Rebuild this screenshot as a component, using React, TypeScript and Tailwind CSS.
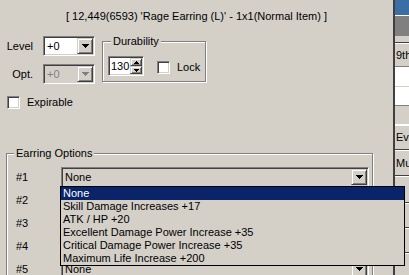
import React from "react";

const sunken =
  "border border-t-[#808080] border-l-[#808080] border-b-white border-r-white shadow-[inset_1px_1px_0_#404040,inset_-1px_-1px_0_#d4d0c8]";
const raised =
  "border border-t-[#d4d0c8] border-l-[#d4d0c8] border-b-[#404040] border-r-[#404040] shadow-[inset_1px_1px_0_#fff,inset_-1px_-1px_0_#808080]";
const etched =
  "border border-[#808080] shadow-[inset_1px_1px_0_#fff,1px_1px_0_#fff]";

function Arrow({ color = "#000" }: { color?: string }) {
  return (
    <svg width="7" height="4" viewBox="0 0 7 4" shapeRendering="crispEdges">
      <rect x="0" y="0" width="7" height="1" fill={color} />
      <rect x="1" y="1" width="5" height="1" fill={color} />
      <rect x="2" y="2" width="3" height="1" fill={color} />
      <rect x="3" y="3" width="1" height="1" fill={color} />
    </svg>
  );
}

function SmallArrow({ up }: { up?: boolean }) {
  return (
    <svg width="5" height="3" viewBox="0 0 5 3" shapeRendering="crispEdges">
      {up ? (
        <>
          <rect x="2" y="0" width="1" height="1" fill="#000" />
          <rect x="1" y="1" width="3" height="1" fill="#000" />
          <rect x="0" y="2" width="5" height="1" fill="#000" />
        </>
      ) : (
        <>
          <rect x="0" y="0" width="5" height="1" fill="#000" />
          <rect x="1" y="1" width="3" height="1" fill="#000" />
          <rect x="2" y="2" width="1" height="1" fill="#000" />
        </>
      )}
    </svg>
  );
}

function Combo({
  value,
  className = "",
  white,
  disabled,
}: {
  value: string;
  className?: string;
  white?: boolean;
  disabled?: boolean;
}) {
  return (
    <div
      className={`flex h-[20px] p-[1px] ${sunken} ${
        white ? "bg-white" : "bg-[#d4d0c8]"
      } ${className}`}
    >
      <div
        className={`flex-1 pl-[2px] leading-[16px] whitespace-nowrap ${
          disabled ? "text-[#808080]" : "text-black"
        }`}
      >
        {value}
      </div>
      <div
        className={`w-[16px] h-[16px] flex items-center justify-center bg-[#d4d0c8] ${raised}`}
      >
        <Arrow color={disabled ? "#808080" : "#000"} />
      </div>
    </div>
  );
}

function Check() {
  return <div className={`w-[13px] h-[13px] bg-white shrink-0 ${sunken}`} />;
}

const items = [
  "None",
  "Skill Damage Increases +17",
  "ATK / HP +20",
  "Excellent Damage Power Increase +35",
  "Critical Damage Power Increase +35",
  "Maximum Life Increase +200",
];

const rows = [
  { n: "#1", v: "None" },
  { n: "#2", v: "" },
  { n: "#3", v: "" },
  { n: "#4", v: "" },
  { n: "#5", v: "None" },
];

export default function App() {
  return (
    <div className="relative w-[409px] h-[275px] overflow-hidden bg-[#d4d0c8] flex font-['Liberation_Sans',Arial,sans-serif] text-[11px] text-black">
      {/* Left panel */}
      <div className="w-[393px] shrink-0 flex flex-col">
        <div className="pt-[9px] pl-[66px] leading-[14px] h-[23px] whitespace-nowrap">
          [ 12,449(6593) 'Rage Earring (L)' - 1x1(Normal Item) ]
        </div>

        <div className="mt-[13px] flex">
          <div className="flex flex-col gap-[8px]">
            <div className="flex items-center">
              <div className="w-[33px] text-right leading-[20px]">Level</div>
              <Combo value="+0" white className="ml-[10px] w-[52px]" />
            </div>
            <div className="flex items-center">
              <div className="w-[33px] text-right leading-[20px]">Opt.</div>
              <Combo value="+0" disabled className="ml-[10px] w-[52px]" />
            </div>
          </div>

          <div className={`relative ml-[7px] mt-[5px] w-[104px] h-[41px] ${etched}`}>
            <span className="absolute -top-[8px] left-[8px] px-[2px] bg-[#d4d0c8] leading-[14px]">
              Durability
            </span>
            <div className="flex items-center pt-[14px] pl-[5px]">
              <div className={`flex h-[20px] w-[36px] p-[1px] bg-white ${sunken}`}>
                <div className="flex-1 pl-[1px] leading-[16px]">130</div>
                <div className="w-[12px] flex flex-col">
                  <div className={`h-[8px] flex items-center justify-center bg-[#d4d0c8] ${raised}`}>
                    <SmallArrow up />
                  </div>
                  <div className={`h-[8px] flex items-center justify-center bg-[#d4d0c8] ${raised}`}>
                    <SmallArrow />
                  </div>
                </div>
              </div>
              <div className="ml-[13px] mt-[2px] flex items-center gap-[7px]">
                <Check />
                <span className="leading-[14px]">Lock</span>
              </div>
            </div>
          </div>
        </div>

        <div className="mt-[11px] pl-[7px] flex items-center gap-[7px]">
          <Check />
          <span className="leading-[14px]">Expirable</span>
        </div>

        <div className={`relative mt-[44px] ml-[6px] w-[367px] h-[140px] ${etched}`}>
          <span className="absolute -top-[8px] left-[7px] px-[2px] bg-[#d4d0c8] leading-[14px]">
            Earring Options
          </span>
          <div className="pt-[13px] pl-[9px] pr-[3px] flex flex-col gap-[3px]">
            {rows.map((r) => (
              <div key={r.n} className="flex items-center">
                <div className="w-[45px] leading-[20px]">{r.n}</div>
                <Combo value={r.v} className="flex-1" />
              </div>
            ))}
          </div>
        </div>
      </div>

      {/* Right panel */}
      <div className="flex-1 flex">
        <div className="w-[2px] bg-[#404040]" />
        <div className="flex-1 flex flex-col overflow-hidden whitespace-nowrap">
          <div className="h-[15px] bg-[#3a6ea5] shrink-0" />
          <div className="h-[1px] bg-white shrink-0" />
          <div className="h-[20px] bg-[#808080] shrink-0" />
          <div className="h-[7px] border-b border-[#404040] shrink-0" />
          <div className="h-[23px] border-t border-white pl-[1px] leading-[22px] shrink-0">9th</div>
          <div className="h-[20px] bg-white border-t border-[#808080] shrink-0" />
          <div className="h-[1px] bg-[#d4d0c8] shrink-0" />
          <div className="h-[19px] bg-white border-b border-[#808080] shrink-0" />
          <div className="h-[19px] border-b border-white shrink-0" />
          <div className="h-[25px] border-t border-white border-b border-b-[#404040] pl-[1px] leading-[23px] shrink-0">Eve</div>
          <div className="h-[26px] border-t border-white border-b border-b-[#404040] pl-[1px] leading-[24px] shrink-0">Mu</div>
          <div className="h-[27px] border-t border-white border-b border-b-[#404040] pl-[1px] leading-[25px] shrink-0">p</div>
          <div className="h-[25px] border-t border-white border-b border-b-[#404040] shrink-0" />
          <div className="h-[25px] border-t border-white border-b border-b-[#404040] pl-[1px] leading-[23px] shrink-0">u</div>
          <div className="h-[25px] border-t border-white shrink-0" />
        </div>
      </div>

      {/* Open dropdown list */}
      <div className="absolute left-[60px] top-[186px] w-[345px] h-[80px] border border-black bg-[#d4d0c8]">
        {items.map((t, i) => (
          <div
            key={t}
            className={`h-[13px] leading-[13px] pl-[2px] whitespace-nowrap ${
              i === 0 ? "bg-[#0a246a] text-white" : ""
            }`}
          >
            {t}
          </div>
        ))}
      </div>
    </div>
  );
}
